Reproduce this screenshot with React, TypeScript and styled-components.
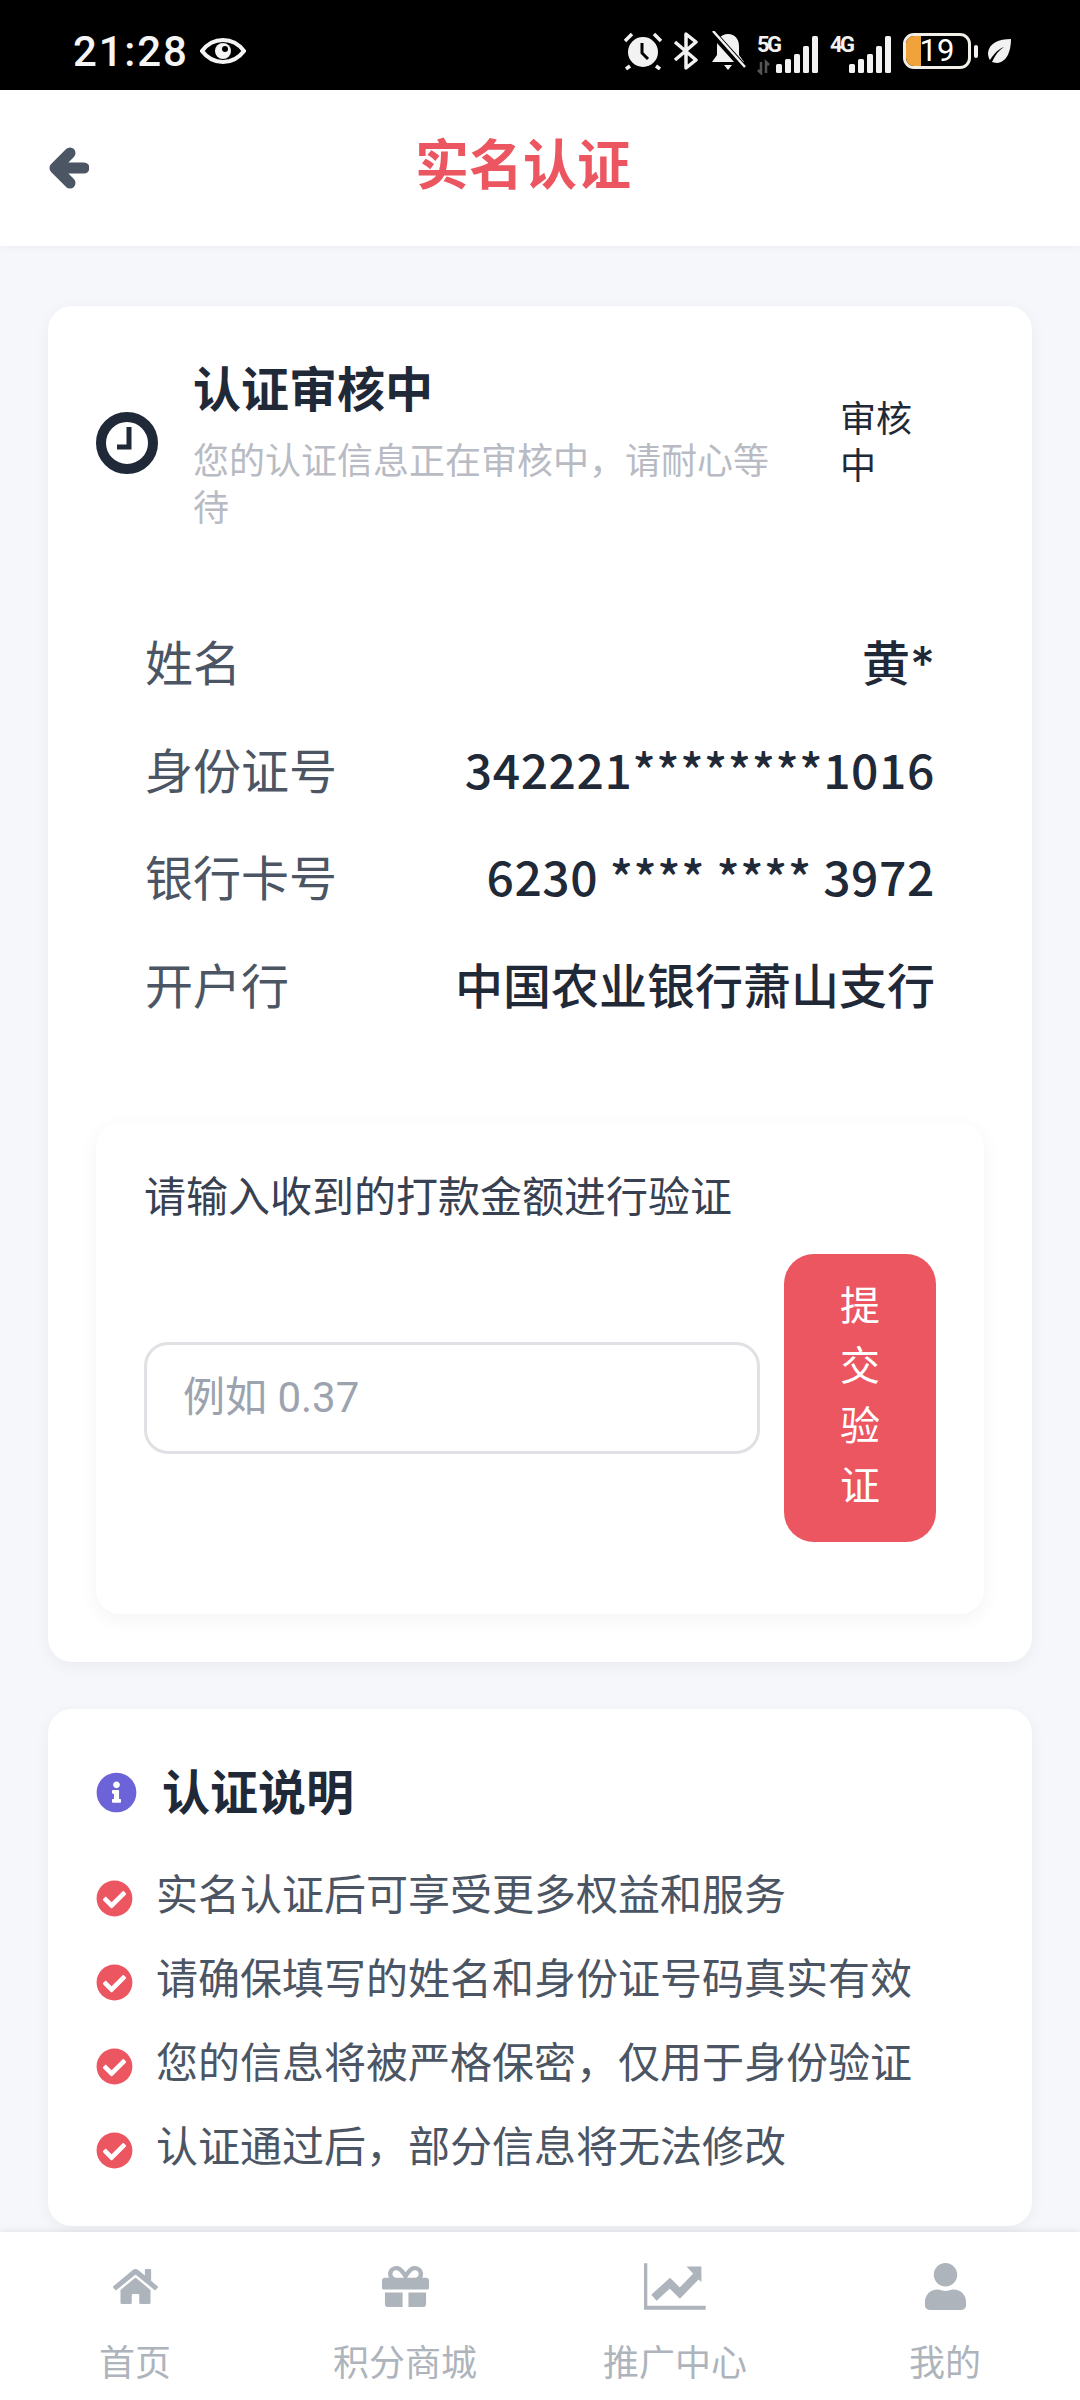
import React from "react";
import styled, { createGlobalStyle } from "styled-components";
import { FaCheckCircle, FaGift, FaHome, FaInfoCircle, FaUser } from "react-icons/fa";

const FONT = `Inter, "Noto Sans CJK SC", sans-serif`;

const GlobalStyle = createGlobalStyle`
   html, body {
      margin: 0;
      padding: 0;
      background: #f5f7fa;
      font-family: ${FONT};
   }
   * {
      box-sizing: border-box;
   }
`;

const Page = styled.div`
   width: 1080px;
   height: 2400px;
   display: flex;
   flex-direction: column;
   overflow: hidden;
   background: #f5f7fa;
`;

const StatusBar = styled.div`
   height: 90px;
   flex: none;
   background: #000;
   color: #f5f5f5;
   display: flex;
   align-items: center;
   justify-content: space-between;
   padding: 12px 68px 0 73px;
`;
const StatusLeft = styled.div`
   display: flex;
   align-items: center;
   gap: 11px;
`;
const Clock = styled.span`
   font-family: Roboto, sans-serif;
   font-size: 42px;
   font-weight: 500;
   letter-spacing: 1.8px;
`;
const StatusRight = styled.div`
   display: flex;
   align-items: center;
   gap: 11px;
`;
const Battery = styled.div`
   position: relative;
   width: 68px;
   height: 36px;
   border: 3px solid #f2efe8;
   border-radius: 11px;
   overflow: hidden;
   display: flex;
   align-items: center;
   justify-content: center;
`;
const BatteryFill = styled.div`
   position: absolute;
   left: 0;
   top: 0;
   bottom: 0;
   width: 15px;
   background: #f0a23b;
`;
const BatteryText = styled.span`
   position: relative;
   font-family: Roboto, sans-serif;
   font-size: 31px;
   line-height: 30px;
   color: #fff;
`;
const BatteryGroup = styled.div`
   display: flex;
   align-items: center;
   gap: 3px;
   margin-right: -3px;
`;
const BatteryNub = styled.div`
   width: 4px;
   height: 13px;
   border-radius: 2px;
   background: #f2f2f2;
`;

const Header = styled.div`
   height: 156px;
   flex: none;
   background: #fff;
   box-shadow: 0 2px 8px rgba(0, 0, 0, 0.04);
   display: flex;
   align-items: center;
   padding-left: 49px;
   position: relative;
   z-index: 1;
`;
const BackIcon = styled.svg`
   width: 40px;
   height: 42px;
   flex: none;
`;
const HeaderTitle = styled.h1`
   margin: 0 0 4px 326px;
   font-size: 54px;
   line-height: 78px;
   font-weight: 700;
   color: #ec5660;
`;

const Main = styled.main`
   flex: 1;
   padding: 60px 48px 0;
   display: flex;
   flex-direction: column;
   gap: 47px;
`;
const Card = styled.section`
   background: #fff;
   border-radius: 24px;
   padding: 48px;
   box-shadow: 0 4px 16px rgba(0, 0, 0, 0.05);
`;

const StatusRow = styled.div`
   display: flex;
   align-items: center;
`;
const ClockIcon = styled.svg`
   width: 62px;
   height: 62px;
   flex: none;
   margin-right: 35px;
`;
const StatusText = styled.div`
   flex: 1;
   min-width: 0;
`;
const StatusTitle = styled.div`
   font-size: 48px;
   line-height: 72px;
   font-weight: 700;
   color: #1f2937;
   margin-bottom: 12px;
`;
const StatusDesc = styled.div`
   font-size: 36px;
   line-height: 47px;
   color: #b8bbc3;
`;
const StatusTag = styled.div`
   width: 96px;
   flex: none;
   margin: 0 48px 0 37px;
   font-size: 36px;
   line-height: 47px;
   color: #1f2937;
`;

const InfoList = styled.div`
   display: flex;
   flex-direction: column;
   gap: 35.5px;
   padding: 96px 49px 48px;
`;
const InfoRow = styled.div`
   display: flex;
   justify-content: space-between;
   font-size: 48px;
   line-height: 72px;
`;
const InfoLabel = styled.span`
   color: #4b5563;
`;
const InfoValue = styled.span<{ $digits?: boolean }>`
   color: #1f2937;
   font-weight: 500;
   ${(p) =>
      p.$digits &&
      `
      font-family: "Noto Sans CJK SC", sans-serif;
      letter-spacing: 0.6px;
      line-height: 64px;
      padding-bottom: 8px;
   `}
`;

const VerifyBox = styled.div`
   margin-top: 52px;
   background: #fff;
   border-radius: 24px;
   padding: 42px 48px 72px;
   box-shadow: 0 5px 20px rgba(0, 0, 0, 0.05);
`;
const VerifyLabel = styled.div`
   font-size: 42px;
   line-height: 63px;
   color: #374151;
   margin-bottom: 26px;
`;
const VerifyRow = styled.div`
   display: flex;
   align-items: center;
   gap: 24px;
`;
const AmountInput = styled.input`
   flex: 1;
   min-width: 0;
   height: 112px;
   padding: 0 36px;
   border: 3px solid #e0e1e4;
   border-radius: 24px;
   background: #fff;
   font-family: Roboto, "Noto Sans CJK SC", sans-serif;
   font-size: 42px;
   outline: none;
   &::placeholder {
      color: #9ca3af;
      opacity: 1;
   }
`;
const SubmitButton = styled.button`
   width: 152px;
   flex: none;
   padding: 22px 56px 26px;
   border: none;
   border-radius: 30px;
   background: #ec5660;
   color: #fff;
   font-family: ${FONT};
   font-size: 40px;
   line-height: 60px;
`;

const NoticeHead = styled.div`
   display: flex;
   align-items: center;
   gap: 25px;
   margin-bottom: 34px;
   color: #6c63d8;
`;
const NoticeTitle = styled.h2`
   margin: 0;
   font-size: 48px;
   line-height: 72px;
   font-weight: 700;
   color: #1f2937;
`;
const NoticeList = styled.ul`
   list-style: none;
   margin: 0;
   padding: 0;
   display: flex;
   flex-direction: column;
   gap: 21px;
`;
const NoticeItem = styled.li`
   display: flex;
   align-items: center;
   gap: 23px;
   font-size: 42px;
   line-height: 63px;
   color: #4b5563;
   svg {
      color: #ec5660;
      flex: none;
      margin-top: 9px;
   }
`;

const TabBar = styled.nav`
   height: 168px;
   flex: none;
   display: grid;
   grid-template-columns: repeat(4, 1fr);
   background: #fff;
   box-shadow: 0 -2px 6px rgba(0, 0, 0, 0.07);
`;
const Tab = styled.div`
   display: flex;
   flex-direction: column;
   align-items: center;
   padding-top: 30px;
   color: #aeb4bc;
`;
const TabIcon = styled.div`
   height: 48px;
   display: flex;
   align-items: center;
   justify-content: center;
   margin-bottom: 26px;
`;
const TabLabel = styled.span`
   font-size: 36px;
   line-height: 54px;
`;

const SignalBars = ({ label, arrows }: { label: string; arrows?: boolean }) => {
   const heights = [9, 14, 19, 27, 37];
   return (
      <svg width={62} height={48} viewBox="0 -8 62 48">
         <text x={0} y={17} fill="#f2f2f2" fontFamily="Roboto, sans-serif" fontWeight={700} fontSize={22} textLength={25}>
            {label}
         </text>
         {arrows && <path d="M4 27v11l-3-3M9 38V27l3 3" fill="none" stroke="#555" strokeWidth={2.5} />}
         {heights.map((h, i) => (
            <rect key={i} x={19 + i * 9} y={38 - h} width={6} height={h} rx={1.5} fill="#f2f2f2" />
         ))}
      </svg>
   );
};

const notices = [
   "实名认证后可享受更多权益和服务",
   "请确保填写的姓名和身份证号码真实有效",
   "您的信息将被严格保密，仅用于身份验证",
   "认证通过后，部分信息将无法修改",
];

const infoRows = [
   { label: "姓名", value: "黄*" },
   { label: "身份证号", value: "342221********1016", digits: true },
   { label: "银行卡号", value: "6230 **** **** 3972", digits: true },
   { label: "开户行", value: "中国农业银行萧山支行" },
];

const App: React.FC = () => {
   return (
      <Page>
         <GlobalStyle />
         <StatusBar>
            <StatusLeft>
               <Clock>21:28</Clock>
               <svg width={46} height={26} viewBox="0 0 46 26">
                  <path d="M2 13C8 5 15 2 23 2s15 3 21 11c-6 8-13 11-21 11S8 21 2 13z" fill="none" stroke="#f5f5f5" strokeWidth={4} />
                  <circle cx={23} cy={13} r={8} fill="#f5f5f5" />
                  <circle cx={25} cy={11} r={3} fill="#000" />
               </svg>
            </StatusLeft>
            <StatusRight>
               <svg width={38} height={38} viewBox="0 0 38 38">
                  <circle cx={19} cy={20} r={15} fill="#f2f2f2" />
                  <path d="M18 11v10l6 6" fill="none" stroke="#000" strokeWidth={3} />
                  <path d="M1 9l7-7M37 9l-7-7M6 34l-4 3M32 34l4 3" stroke="#f2f2f2" strokeWidth={3.5} />
               </svg>
               <svg width={26} height={38} viewBox="0 0 26 38">
                  <path d="M2 10l21 18-10 8V2l10 8L2 28" fill="none" stroke="#f2f2f2" strokeWidth={3.5} strokeLinejoin="round" />
               </svg>
               <svg width={36} height={40} viewBox="0 0 36 40">
                  <path d="M18 3c7 0 11 5 11 12v9l5 7H2l5-7v-9C7 8 11 3 18 3z" fill="#f2f2f2" />
                  <path d="M14 34h8l-4 5z" fill="#f2f2f2" />
                  <path d="M1 0l34 38" stroke="#000" strokeWidth={7} />
                  <path d="M3 0l32 36" stroke="#f2f2f2" strokeWidth={2.5} />
               </svg>
               <SignalBars label="5G" arrows />
               <SignalBars label="4G" />
               <BatteryGroup>
                  <Battery>
                     <BatteryFill />
                     <BatteryText>19</BatteryText>
                  </Battery>
                  <BatteryNub />
               </BatteryGroup>
               <svg width={26} height={26} viewBox="0 0 26 26">
                  <path d="M25 1C13 1 3 5 2 15c0 3 1 6 2 7C9 14 13 11 18 9c-5 3-9 8-12 15 1 0 3 1 5 1 10-1 14-12 14-24z" fill="#f2f2f2" />
               </svg>
            </StatusRight>
         </StatusBar>

         <Header>
            <BackIcon viewBox="0 0 40 42">
               <path d="M21 6L6 21l15 15M8 21h27" fill="none" stroke="#4b5563" strokeWidth={11} strokeLinecap="round" strokeLinejoin="round" />
            </BackIcon>
            <HeaderTitle>实名认证</HeaderTitle>
         </Header>

         <Main>
            <Card>
               <StatusRow>
                  <ClockIcon viewBox="0 0 62 62">
                     <circle cx={31} cy={31} r={26} fill="none" stroke="#1f2937" strokeWidth={10} />
                     <path d="M33 15v20H21" fill="none" stroke="#1f2937" strokeWidth={5} />
                  </ClockIcon>
                  <StatusText>
                     <StatusTitle>认证审核中</StatusTitle>
                     <StatusDesc>您的认证信息正在审核中，请耐心等待</StatusDesc>
                  </StatusText>
                  <StatusTag>审核中</StatusTag>
               </StatusRow>
               <InfoList>
                  {infoRows.map((row) => (
                     <InfoRow key={row.label}>
                        <InfoLabel>{row.label}</InfoLabel>
                        <InfoValue $digits={row.digits}>{row.value}</InfoValue>
                     </InfoRow>
                  ))}
               </InfoList>
               <VerifyBox>
                  <VerifyLabel>请输入收到的打款金额进行验证</VerifyLabel>
                  <VerifyRow>
                     <AmountInput placeholder="例如 0.37" />
                     <SubmitButton>提交验证</SubmitButton>
                  </VerifyRow>
               </VerifyBox>
            </Card>

            <Card>
               <NoticeHead>
                  <FaInfoCircle size={41} />
                  <NoticeTitle>认证说明</NoticeTitle>
               </NoticeHead>
               <NoticeList>
                  {notices.map((text) => (
                     <NoticeItem key={text}>
                        <FaCheckCircle size={37} />
                        {text}
                     </NoticeItem>
                  ))}
               </NoticeList>
            </Card>
         </Main>

         <TabBar>
            <Tab>
               <TabIcon>
                  <FaHome size={45} />
               </TabIcon>
               <TabLabel>首页</TabLabel>
            </Tab>
            <Tab>
               <TabIcon>
                  <FaGift size={47} />
               </TabIcon>
               <TabLabel>积分商城</TabLabel>
            </Tab>
            <Tab>
               <TabIcon>
                  <svg width={63} height={47} viewBox="0 0 190 140" fill="currentColor">
                     <path d="M0 0h10v128h176v12H0z" />
                     <path d="M30 104L78 60l30 30 50-52" fill="none" stroke="currentColor" strokeWidth={24} />
                     <path d="M128 10h45v47z" />
                  </svg>
               </TabIcon>
               <TabLabel>推广中心</TabLabel>
            </Tab>
            <Tab>
               <TabIcon>
                  <FaUser size={47} />
               </TabIcon>
               <TabLabel>我的</TabLabel>
            </Tab>
         </TabBar>
      </Page>
   );
};

export default App;
